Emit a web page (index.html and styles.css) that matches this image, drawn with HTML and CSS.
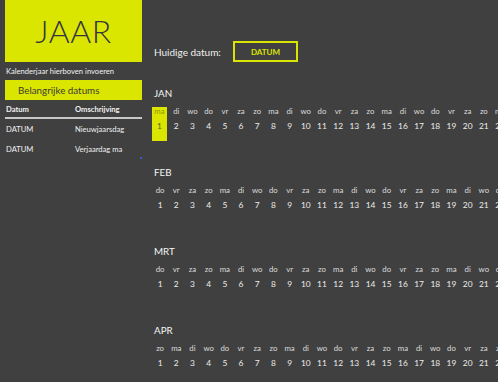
FILE: index.html
```html
<!DOCTYPE html>
<html lang="nl">
<head>
<meta charset="utf-8">
<title>Jaarkalender</title>
<link rel="stylesheet" href="styles.css">
</head>
<body>
<div class="page">
  <aside class="side">
    <div class="year">JAAR</div>
    <div class="hint">Kalenderjaar hierboven invoeren</div>
    <div class="section">Belangrijke datums</div>
    <div class="table">
      <div class="trow thead"><span class="c1">Datum</span><span class="c2">Omschrijving</span></div>
      <div class="trow"><span class="c1">DATUM</span><span class="c2">Nieuwjaarsdag</span></div>
      <div class="trow"><span class="c1">DATUM</span><span class="c2">Verjaardag ma</span></div>
    </div>
    <span class="dot"></span>
  </aside>
  <main class="main">
    <div class="today">
      <span class="today-label">Huidige datum:</span>
      <span class="today-box">DATUM</span>
    </div>

    <section class="month">
      <div class="mlabel">JAN</div>
      <div class="days">
        <div class="d hl"><span class="n">ma</span><span class="v">1</span></div>
        <div class="d"><span class="n">di</span><span class="v">2</span></div>
        <div class="d"><span class="n">wo</span><span class="v">3</span></div>
        <div class="d"><span class="n">do</span><span class="v">4</span></div>
        <div class="d"><span class="n">vr</span><span class="v">5</span></div>
        <div class="d"><span class="n">za</span><span class="v">6</span></div>
        <div class="d"><span class="n">zo</span><span class="v">7</span></div>
        <div class="d"><span class="n">ma</span><span class="v">8</span></div>
        <div class="d"><span class="n">di</span><span class="v">9</span></div>
        <div class="d"><span class="n">wo</span><span class="v">10</span></div>
        <div class="d"><span class="n">do</span><span class="v">11</span></div>
        <div class="d"><span class="n">vr</span><span class="v">12</span></div>
        <div class="d"><span class="n">za</span><span class="v">13</span></div>
        <div class="d"><span class="n">zo</span><span class="v">14</span></div>
        <div class="d"><span class="n">ma</span><span class="v">15</span></div>
        <div class="d"><span class="n">di</span><span class="v">16</span></div>
        <div class="d"><span class="n">wo</span><span class="v">17</span></div>
        <div class="d"><span class="n">do</span><span class="v">18</span></div>
        <div class="d"><span class="n">vr</span><span class="v">19</span></div>
        <div class="d"><span class="n">za</span><span class="v">20</span></div>
        <div class="d"><span class="n">zo</span><span class="v">21</span></div>
        <div class="d"><span class="n">ma</span><span class="v">22</span></div>
        <div class="d"><span class="n">di</span><span class="v">23</span></div>
        <div class="d"><span class="n">wo</span><span class="v">24</span></div>
        <div class="d"><span class="n">do</span><span class="v">25</span></div>
        <div class="d"><span class="n">vr</span><span class="v">26</span></div>
        <div class="d"><span class="n">za</span><span class="v">27</span></div>
        <div class="d"><span class="n">zo</span><span class="v">28</span></div>
        <div class="d"><span class="n">ma</span><span class="v">29</span></div>
        <div class="d"><span class="n">di</span><span class="v">30</span></div>
        <div class="d"><span class="n">wo</span><span class="v">31</span></div>
      </div>
    </section>

    <section class="month">
      <div class="mlabel">FEB</div>
      <div class="days">
        <div class="d"><span class="n">do</span><span class="v">1</span></div>
        <div class="d"><span class="n">vr</span><span class="v">2</span></div>
        <div class="d"><span class="n">za</span><span class="v">3</span></div>
        <div class="d"><span class="n">zo</span><span class="v">4</span></div>
        <div class="d"><span class="n">ma</span><span class="v">5</span></div>
        <div class="d"><span class="n">di</span><span class="v">6</span></div>
        <div class="d"><span class="n">wo</span><span class="v">7</span></div>
        <div class="d"><span class="n">do</span><span class="v">8</span></div>
        <div class="d"><span class="n">vr</span><span class="v">9</span></div>
        <div class="d"><span class="n">za</span><span class="v">10</span></div>
        <div class="d"><span class="n">zo</span><span class="v">11</span></div>
        <div class="d"><span class="n">ma</span><span class="v">12</span></div>
        <div class="d"><span class="n">di</span><span class="v">13</span></div>
        <div class="d"><span class="n">wo</span><span class="v">14</span></div>
        <div class="d"><span class="n">do</span><span class="v">15</span></div>
        <div class="d"><span class="n">vr</span><span class="v">16</span></div>
        <div class="d"><span class="n">za</span><span class="v">17</span></div>
        <div class="d"><span class="n">zo</span><span class="v">18</span></div>
        <div class="d"><span class="n">ma</span><span class="v">19</span></div>
        <div class="d"><span class="n">di</span><span class="v">20</span></div>
        <div class="d"><span class="n">wo</span><span class="v">21</span></div>
        <div class="d"><span class="n">do</span><span class="v">22</span></div>
        <div class="d"><span class="n">vr</span><span class="v">23</span></div>
        <div class="d"><span class="n">za</span><span class="v">24</span></div>
        <div class="d"><span class="n">zo</span><span class="v">25</span></div>
        <div class="d"><span class="n">ma</span><span class="v">26</span></div>
        <div class="d"><span class="n">di</span><span class="v">27</span></div>
        <div class="d"><span class="n">wo</span><span class="v">28</span></div>
      </div>
    </section>

    <section class="month">
      <div class="mlabel">MRT</div>
      <div class="days">
        <div class="d"><span class="n">do</span><span class="v">1</span></div>
        <div class="d"><span class="n">vr</span><span class="v">2</span></div>
        <div class="d"><span class="n">za</span><span class="v">3</span></div>
        <div class="d"><span class="n">zo</span><span class="v">4</span></div>
        <div class="d"><span class="n">ma</span><span class="v">5</span></div>
        <div class="d"><span class="n">di</span><span class="v">6</span></div>
        <div class="d"><span class="n">wo</span><span class="v">7</span></div>
        <div class="d"><span class="n">do</span><span class="v">8</span></div>
        <div class="d"><span class="n">vr</span><span class="v">9</span></div>
        <div class="d"><span class="n">za</span><span class="v">10</span></div>
        <div class="d"><span class="n">zo</span><span class="v">11</span></div>
        <div class="d"><span class="n">ma</span><span class="v">12</span></div>
        <div class="d"><span class="n">di</span><span class="v">13</span></div>
        <div class="d"><span class="n">wo</span><span class="v">14</span></div>
        <div class="d"><span class="n">do</span><span class="v">15</span></div>
        <div class="d"><span class="n">vr</span><span class="v">16</span></div>
        <div class="d"><span class="n">za</span><span class="v">17</span></div>
        <div class="d"><span class="n">zo</span><span class="v">18</span></div>
        <div class="d"><span class="n">ma</span><span class="v">19</span></div>
        <div class="d"><span class="n">di</span><span class="v">20</span></div>
        <div class="d"><span class="n">wo</span><span class="v">21</span></div>
        <div class="d"><span class="n">do</span><span class="v">22</span></div>
        <div class="d"><span class="n">vr</span><span class="v">23</span></div>
        <div class="d"><span class="n">za</span><span class="v">24</span></div>
        <div class="d"><span class="n">zo</span><span class="v">25</span></div>
        <div class="d"><span class="n">ma</span><span class="v">26</span></div>
        <div class="d"><span class="n">di</span><span class="v">27</span></div>
        <div class="d"><span class="n">wo</span><span class="v">28</span></div>
        <div class="d"><span class="n">do</span><span class="v">29</span></div>
        <div class="d"><span class="n">vr</span><span class="v">30</span></div>
        <div class="d"><span class="n">za</span><span class="v">31</span></div>
      </div>
    </section>

    <section class="month">
      <div class="mlabel">APR</div>
      <div class="days">
        <div class="d"><span class="n">zo</span><span class="v">1</span></div>
        <div class="d"><span class="n">ma</span><span class="v">2</span></div>
        <div class="d"><span class="n">di</span><span class="v">3</span></div>
        <div class="d"><span class="n">wo</span><span class="v">4</span></div>
        <div class="d"><span class="n">do</span><span class="v">5</span></div>
        <div class="d"><span class="n">vr</span><span class="v">6</span></div>
        <div class="d"><span class="n">za</span><span class="v">7</span></div>
        <div class="d"><span class="n">zo</span><span class="v">8</span></div>
        <div class="d"><span class="n">ma</span><span class="v">9</span></div>
        <div class="d"><span class="n">di</span><span class="v">10</span></div>
        <div class="d"><span class="n">wo</span><span class="v">11</span></div>
        <div class="d"><span class="n">do</span><span class="v">12</span></div>
        <div class="d"><span class="n">vr</span><span class="v">13</span></div>
        <div class="d"><span class="n">za</span><span class="v">14</span></div>
        <div class="d"><span class="n">zo</span><span class="v">15</span></div>
        <div class="d"><span class="n">ma</span><span class="v">16</span></div>
        <div class="d"><span class="n">di</span><span class="v">17</span></div>
        <div class="d"><span class="n">wo</span><span class="v">18</span></div>
        <div class="d"><span class="n">do</span><span class="v">19</span></div>
        <div class="d"><span class="n">vr</span><span class="v">20</span></div>
        <div class="d"><span class="n">za</span><span class="v">21</span></div>
        <div class="d"><span class="n">zo</span><span class="v">22</span></div>
        <div class="d"><span class="n">ma</span><span class="v">23</span></div>
        <div class="d"><span class="n">di</span><span class="v">24</span></div>
        <div class="d"><span class="n">wo</span><span class="v">25</span></div>
        <div class="d"><span class="n">do</span><span class="v">26</span></div>
        <div class="d"><span class="n">vr</span><span class="v">27</span></div>
        <div class="d"><span class="n">za</span><span class="v">28</span></div>
        <div class="d"><span class="n">zo</span><span class="v">29</span></div>
        <div class="d"><span class="n">ma</span><span class="v">30</span></div>
      </div>
    </section>
  </main>
</div>
</body>
</html>
```

FILE: styles.css
```css
* { box-sizing: border-box; }
html, body {
  margin: 0;
  padding: 0;
  background: #404040;
  height: 100%;
  overflow: hidden;
}
body {
  font-family: Lato, "Open Sans", sans-serif;
  color: #e4e4e4;
}
.page {
  display: flex;
  width: 498px;
  height: 382px;
  overflow: hidden;
}
.side {
  position: relative;
  flex: 0 0 137px;
  margin-left: 5px;
  display: flex;
  flex-direction: column;
}
.year {
  height: 62px;
  background: #dbe600;
  color: #343440;
  font-size: 32px;
  font-weight: 300;
  line-height: 62px;
  text-align: center;
  letter-spacing: 0.5px;
}
.hint {
  margin-top: 3px;
  margin-left: 1px;
  font-size: 7.6px;
  line-height: 12px;
  color: #f0f0f0;
  white-space: nowrap;
}
.section {
  margin-top: 3px;
  height: 20px;
  background: #dbe600;
  color: #3a3a3a;
  font-size: 9.8px;
  line-height: 20px;
  padding-left: 13px;
}
.table {
  display: flex;
  flex-direction: column;
  margin-top: 1px;
}
.trow {
  display: flex;
  height: 20px;
  align-items: center;
  font-size: 7.6px;
  color: #f0f0f0;
  white-space: nowrap;
}
.thead {
  font-weight: 700;
  height: 18px;
  border-bottom: 2px solid #c8c8c8;
}
.c1 { width: 70px; padding-left: 1px; }
.c2 { flex: 1; }
.dot {
  position: absolute;
  left: 135px;
  top: 157px;
  width: 2px;
  height: 2px;
  background: #3a5bd0;
}
.main {
  flex: 1;
  padding-left: 10px;
  padding-top: 41px;
  overflow: hidden;
  display: flex;
  flex-direction: column;
}
.today {
  display: flex;
  align-items: center;
  height: 21px;
}
.today-label {
  flex: 0 0 81px;
  padding-left: 2px;
  font-size: 10px;
  color: #f0f0f0;
  white-space: nowrap;
}
.today-box {
  flex: 0 0 65px;
  height: 21px;
  border: 2px solid #dbe600;
  color: #dbe600;
  font-weight: 700;
  font-size: 8px;
  display: flex;
  align-items: center;
  justify-content: center;
}
.month {
  height: 79px;
  flex: 0 0 auto;
}
.today + .month { margin-top: 24px; }
.mlabel {
  height: 20.5px;
  line-height: 14px;
  padding-left: 2px;
  font-size: 9.8px;
  color: #f4f4f4;
}
.days {
  display: grid;
  grid-template-columns: repeat(31, 16.2px);
  width: max-content;
}
.d {
  display: flex;
  flex-direction: column;
  align-items: center;
  padding-bottom: 3px;
}
.n {
  height: 8px;
  line-height: 8px;
  font-size: 7.8px;
  color: #dcdcdc;
}
.v {
  height: 23px;
  line-height: 23px;
  font-size: 8.4px;
  color: #ececec;
}
.hl {
  background: #dbe600;
  width: 15px;
}
.hl .n { color: #8f9600; }
.hl .v { color: #5a5a30; }
```
